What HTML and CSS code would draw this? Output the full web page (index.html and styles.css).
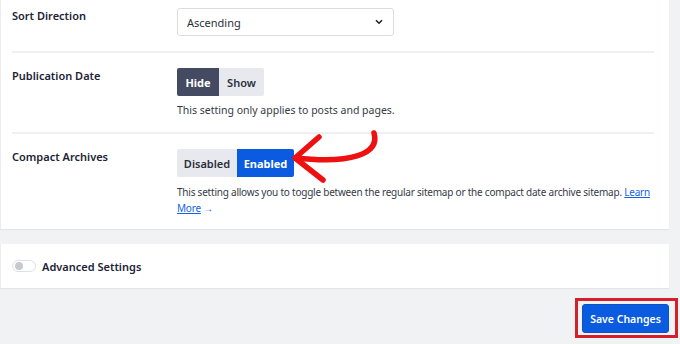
FILE: index.html
```html
<!DOCTYPE html>
<html>
<head>
<meta charset="utf-8">
<link rel="stylesheet" href="styles.css">
</head>
<body>
<div class="page">
  <div class="card">
    <div class="row row-first">
      <div class="label">Sort Direction</div>
      <div class="control">
        <div class="select">
          <span>Ascending</span>
          <svg class="chev" width="8" height="6" viewBox="0 0 8 6"><path d="M1 1.2 L4 4.2 L7 1.2" fill="none" stroke="#1d2327" stroke-width="1.6"/></svg>
        </div>
      </div>
    </div>
    <div class="row">
      <div class="label">Publication Date</div>
      <div class="control">
        <div class="btn-group">
          <span class="seg seg-dark">Hide</span><span class="seg seg-light">Show</span>
        </div>
        <p class="desc">This setting only applies to posts and pages.</p>
      </div>
    </div>
    <div class="row row-last">
      <div class="label">Compact Archives</div>
      <div class="control">
        <div class="btn-group">
          <span class="seg seg-light seg-wide">Disabled</span><span class="seg seg-blue seg-wide">Enabled</span>
        </div>
        <p class="desc desc-long">This setting allows you to toggle between the regular sitemap or the compact date archive sitemap. <a href="#">Learn More</a> <span class="link-arrow">&rarr;</span></p>
      </div>
    </div>
    <svg class="arrow" width="100" height="64" viewBox="0 0 100 64">
      <path d="M83 13 C89 34 60 44 5 38" fill="none" stroke="#ee1111" stroke-width="5.5" stroke-linecap="round"/>
      <path d="M28 17 L4 38 L32 60" fill="none" stroke="#ee1111" stroke-width="5.5" stroke-linecap="round" stroke-linejoin="round"/>
    </svg>
  </div>
  <div class="card card-adv">
    <span class="toggle"><span class="knob"></span></span>
    <span class="adv-label">Advanced Settings</span>
  </div>
  <div class="footer">
    <div class="highlight">
      <button class="save">Save Changes</button>
    </div>
  </div>
</div>
</body>
</html>
```
FILE: styles.css
```css
* { box-sizing: border-box; }
html, body { margin: 0; padding: 0; }
body {
  background: #f1f2f4;
  font-family: "Noto Sans", "Open Sans", sans-serif;
  color: #1d2336;
  width: 680px;
  height: 344px;
  overflow: hidden;
}
.page { padding-right: 11px; }
.card {
  background: #fff;
  position: relative;
  border-left: 1px solid #ececef;
  box-shadow: 0 1px 1px #e3e4e8;
}
.card > .row { margin: 0 15px 0 11px; }
.row {
  display: flex;
  padding: 15px 0 14px;
  border-bottom: 2px solid #f0f0f3;
}
.row-first { padding-top: 8px; padding-bottom: 15px; }
.row-last { border-bottom: none; padding-bottom: 13px; }
.label {
  width: 165px;
  flex: none;
  font-size: 11px;
  line-height: 15px;
  font-weight: 600;
}
.control { flex: 1; min-width: 0; }
.select {
  width: 217px;
  height: 28px;
  border: 1px solid #dcdde2;
  border-radius: 3px;
  display: flex;
  align-items: center;
  justify-content: space-between;
  padding: 0 10px 0 9px;
  font-size: 11px;
  color: #2c3038;
}
.btn-group { display: flex; }
.seg {
  height: 28px;
  display: flex;
  align-items: center;
  justify-content: center;
  font-size: 11px;
  font-weight: 700;
}
.seg-dark { width: 42px; background: #434a62; color: #fff; border-radius: 2px 0 0 2px; }
.seg-light { width: 45px; background: #e8e9ee; color: #2a2f3b; border-radius: 0 2px 2px 0; font-weight: 600; }
.seg-wide.seg-light { width: 60px; border-radius: 2px 0 0 2px; }
.seg-blue { width: 57px; background: #0b5be1; color: #fff; border-radius: 0 2px 2px 0; }
.desc {
  margin: 6px 0 0;
  font-size: 10.5px;
  line-height: 16px;
  color: #353a48;
}
.desc-long { margin: 7px -6px 0 0; font-size: 10px; letter-spacing: -0.22px; }
.desc a { color: #1363e6; }
.link-arrow { color: #1363e6; }
.arrow {
  position: absolute;
  left: 290px;
  top: 120px;
}
.card-adv {
  margin-top: 15px;
  height: 44px;
  display: flex;
  align-items: center;
  padding-left: 11px;
}
.toggle {
  width: 24px;
  height: 12px;
  border: 1px solid #e0e1e6;
  border-radius: 6px;
  background: #fff;
  display: flex;
  align-items: center;
  padding-left: 2px;
}
.knob { width: 8px; height: 8px; border-radius: 50%; background: #c8c9cf; }
.adv-label { margin-left: 6px; font-size: 11px; font-weight: 600; color: #1d2336; }
.footer {
  display: flex;
  justify-content: flex-end;
  margin-top: 10px;
  margin-right: -9px;
}
.highlight {
  border: 3px solid #d3202a;
  padding: 3px 6px 2px 4px;
}
.save {
  display: block;
  width: 87px;
  height: 29px;
  background: #0b5be1;
  color: #fff;
  border: 1px solid #0a52cc;
  border-radius: 3px;
  font-family: "Noto Sans", "Open Sans", sans-serif;
  font-size: 10.5px;
  font-weight: 600;
  padding: 0;
}
```
